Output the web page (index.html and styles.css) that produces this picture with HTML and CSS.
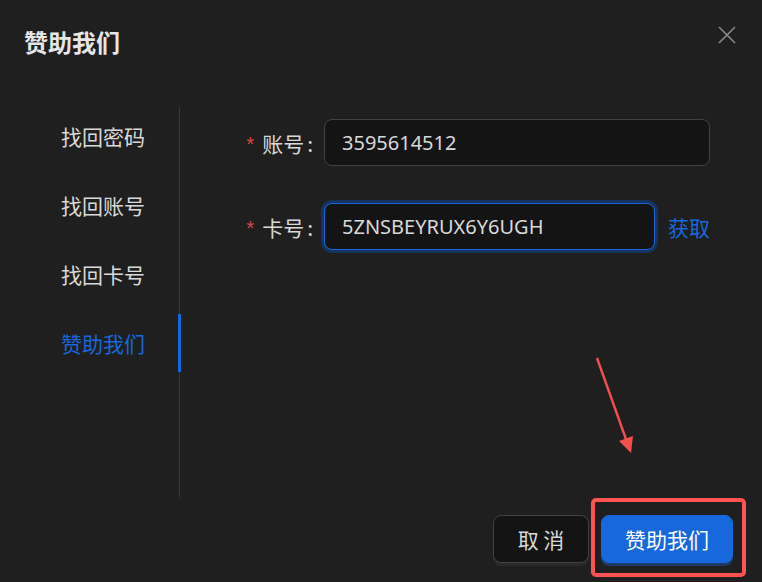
FILE: index.html
```html
<!DOCTYPE html>
<html lang="zh-CN">
<head>
  <meta charset="UTF-8">
  <meta name="viewport" content="width=device-width, initial-scale=1.0">
  <title>赞助我们</title>
  <link rel="stylesheet" href="styles.css">
</head>
<body>
  <div class="modal">
    <div class="modal-header">
      <h2 class="modal-title">赞助我们</h2>
      <button class="close-btn" aria-label="关闭">
        <svg width="18" height="18" viewBox="0 0 18 18">
          <path d="M1 1 L17 17 M17 1 L1 17" stroke="#8a8a8a" stroke-width="1.6" fill="none"/>
        </svg>
      </button>
    </div>

    <div class="modal-body">
      <div class="side-nav">
        <div class="nav-item">找回密码</div>
        <div class="nav-item">找回账号</div>
        <div class="nav-item">找回卡号</div>
        <div class="nav-item active">赞助我们</div>
      </div>

      <div class="form">
        <div class="form-row">
          <label class="form-label"><span class="required">*</span>账号<span class="colon">:</span></label>
          <input class="text-input" type="text" value="3595614512">
        </div>
        <div class="form-row">
          <label class="form-label"><span class="required">*</span>卡号<span class="colon">:</span></label>
          <input class="text-input focused" type="text" value="5ZNSBEYRUX6Y6UGH">
          <a href="#" class="fetch-link">获取</a>
        </div>
      </div>
    </div>

    <div class="modal-footer">
      <button class="btn">取 消</button>
      <button class="btn btn-primary">赞助我们</button>
    </div>

    <svg class="annotation" width="762" height="582" viewBox="0 0 762 582">
      <rect x="593" y="500" width="151" height="75" rx="3" fill="none" stroke="#ff5252" stroke-width="4"/>
      <line x1="597" y1="358" x2="627" y2="442" stroke="#f44f4f" stroke-width="2.4"/>
      <polygon points="631,453 619,441 633,436" fill="#f44f4f"/>
    </svg>
  </div>
</body>
</html>
```

FILE: styles.css
```css
:root {
  --bg-color: #1f1f1f;
  --input-bg: #141414;
  --border-color: #424242;
  --text-color: #d9d9d9;
  --primary-color: #1668dc;
  --error-color: #dc4446;
}

body {
  margin: 0;
  background: var(--bg-color);
  font-family: "Noto Sans", "Noto Sans CJK SC", sans-serif;
  color: var(--text-color);
}

.modal {
  position: relative;
  width: 762px;
  height: 582px;
  background: var(--bg-color);
  overflow: hidden;
}

.modal-header {
  display: flex;
  justify-content: space-between;
  align-items: flex-start;
  height: 107px;
  box-sizing: border-box;
  padding: 30px 26px 0 24px;
}

.modal-title {
  margin: 0;
  font-family: "Noto Sans CJK SC", sans-serif;
  font-size: 24px;
  line-height: 24px;
  font-weight: 700;
  color: #e6e6e6;
}

.close-btn {
  background: none;
  border: none;
  padding: 0;
  margin-top: -4px;
  width: 18px;
  height: 18px;
  cursor: pointer;
}

.modal-body {
  display: flex;
  height: 390px;
}

.side-nav {
  flex-shrink: 0;
  width: 179px;
  border-right: 1px solid #3a3a3a;
}

.nav-item {
  position: relative;
  display: flex;
  align-items: center;
  height: 58px;
  margin-bottom: 11px;
  padding-left: 61px;
  font-family: "Noto Sans CJK SC", sans-serif;
  font-size: 21px;
  color: var(--text-color);
  cursor: pointer;
}

.nav-item.active {
  color: var(--primary-color);
}

.nav-item.active::after {
  content: '';
  position: absolute;
  top: 0;
  right: -2px;
  width: 3px;
  height: 100%;
  background: var(--primary-color);
}

.form {
  flex: 1;
  min-width: 0;
  padding: 12px 52px 0 0;
  display: flex;
  flex-direction: column;
  gap: 37px;
}

.form-row {
  display: flex;
  align-items: center;
  height: 47px;
}

.form-label {
  flex-shrink: 0;
  width: 144px;
  box-sizing: border-box;
  padding-right: 11px;
  text-align: right;
  font-family: "Noto Sans CJK SC", sans-serif;
  font-size: 21px;
  color: var(--text-color);
}

.colon {
  margin-left: 3px;
}

.required {
  color: var(--error-color);
  font-family: "Liberation Mono", monospace;
  font-size: 20px;
  margin-right: 6px;
}

.text-input {
  flex: 1;
  min-width: 0;
  height: 47px;
  box-sizing: border-box;
  padding: 0 17px;
  background: var(--input-bg);
  border: 1px solid var(--border-color);
  border-radius: 8px;
  font-family: "Noto Sans", sans-serif;
  font-size: 20px;
  color: var(--text-color);
  outline: none;
}

.text-input.focused {
  border-color: var(--primary-color);
  box-shadow: 0 0 0 3px #15335e;
}

.fetch-link {
  margin-left: 13px;
  font-family: "Noto Sans CJK SC", sans-serif;
  font-size: 21px;
  color: var(--primary-color);
  text-decoration: none;
  white-space: nowrap;
}

.modal-footer {
  display: flex;
  justify-content: flex-end;
  gap: 12px;
  padding: 18px 29px 0 0;
}

.btn {
  width: 96px;
  height: 48px;
  padding: 0;
  border: 1px solid var(--border-color);
  border-radius: 8px;
  background: var(--input-bg);
  color: var(--text-color);
  font-family: "Noto Sans CJK SC", sans-serif;
  font-size: 21px;
  box-shadow: 0 3px 0 #2a2a2a;
  cursor: pointer;
}

.btn-primary {
  width: 132px;
  border-color: var(--primary-color);
  background: var(--primary-color);
  color: #fff;
  box-shadow: 0 3px 0 #1d3b66;
}

.annotation {
  position: absolute;
  top: 0;
  left: 0;
  pointer-events: none;
}
```
